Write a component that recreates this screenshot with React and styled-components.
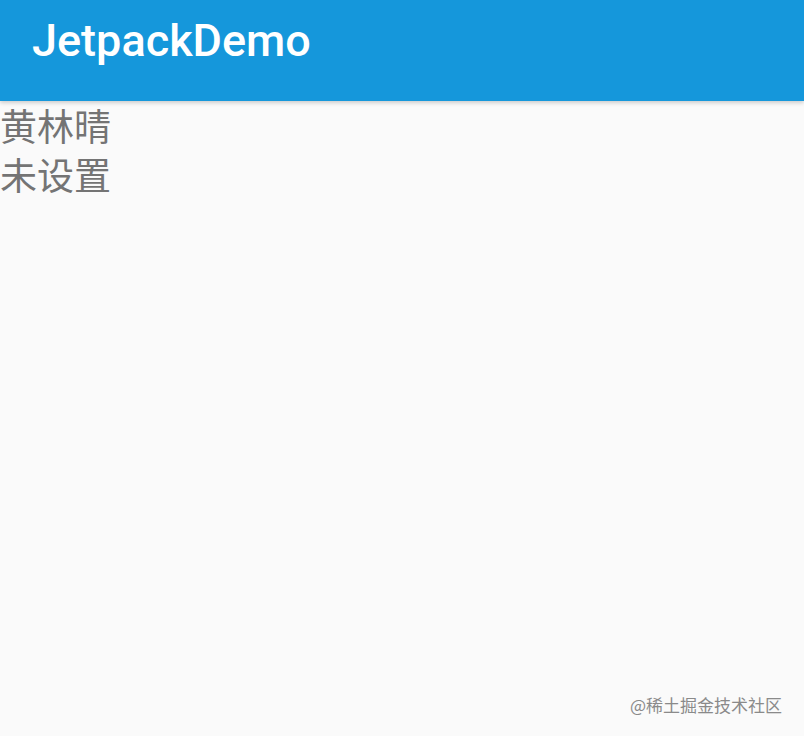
import React from "react";
import styled, { createGlobalStyle } from "styled-components";

const Global = createGlobalStyle`
  html, body { margin: 0; padding: 0; background: #fafafa; }
  #root { min-height: 100vh; }
`;

const Page = styled.div`
  position: relative;
  height: 736px;
  background: #fafafa;
  overflow: hidden;
  font-family: Roboto, "Noto Sans CJK SC", sans-serif;
`;

const AppBar = styled.header`
  height: 101px;
  background: #1597db;
  display: flex;
  align-items: center;
  padding: 0 0 0 32px;
  box-shadow: 0 2px 4px rgba(0, 0, 0, 0.18);
  position: relative;
  z-index: 1;
`;

const Title = styled.h1`
  margin: 0 0 19px 0;
  font-family: Roboto, sans-serif;
  font-weight: 500;
  font-size: 45px;
  line-height: 1.2;
  color: #ffffff;
  letter-spacing: 0;
`;

const Content = styled.main`
  display: flex;
  flex-direction: column;
  padding-top: 0;
`;

const Line = styled.div`
  font-family: "Noto Sans CJK SC", sans-serif;
  font-size: 37px;
  line-height: 49px;
  color: #747474;
`;

const Watermark = styled.div`
  position: absolute;
  right: 22px;
  bottom: 19px;
  display: flex;
  align-items: center;
`;

const Mark = styled.span`
  font-family: "Noto Sans CJK SC", sans-serif;
  font-size: 17px;
  color: #8a8a8a;
`;

export default function App() {
  return (
    <>
      <Global />
      <Page>
        <AppBar>
          <Title>JetpackDemo</Title>
        </AppBar>
        <Content>
          <Line>黄林晴</Line>
          <Line>未设置</Line>
        </Content>
        <Watermark>
          <Mark>@稀土掘金技术社区</Mark>
        </Watermark>
      </Page>
    </>
  );
}
